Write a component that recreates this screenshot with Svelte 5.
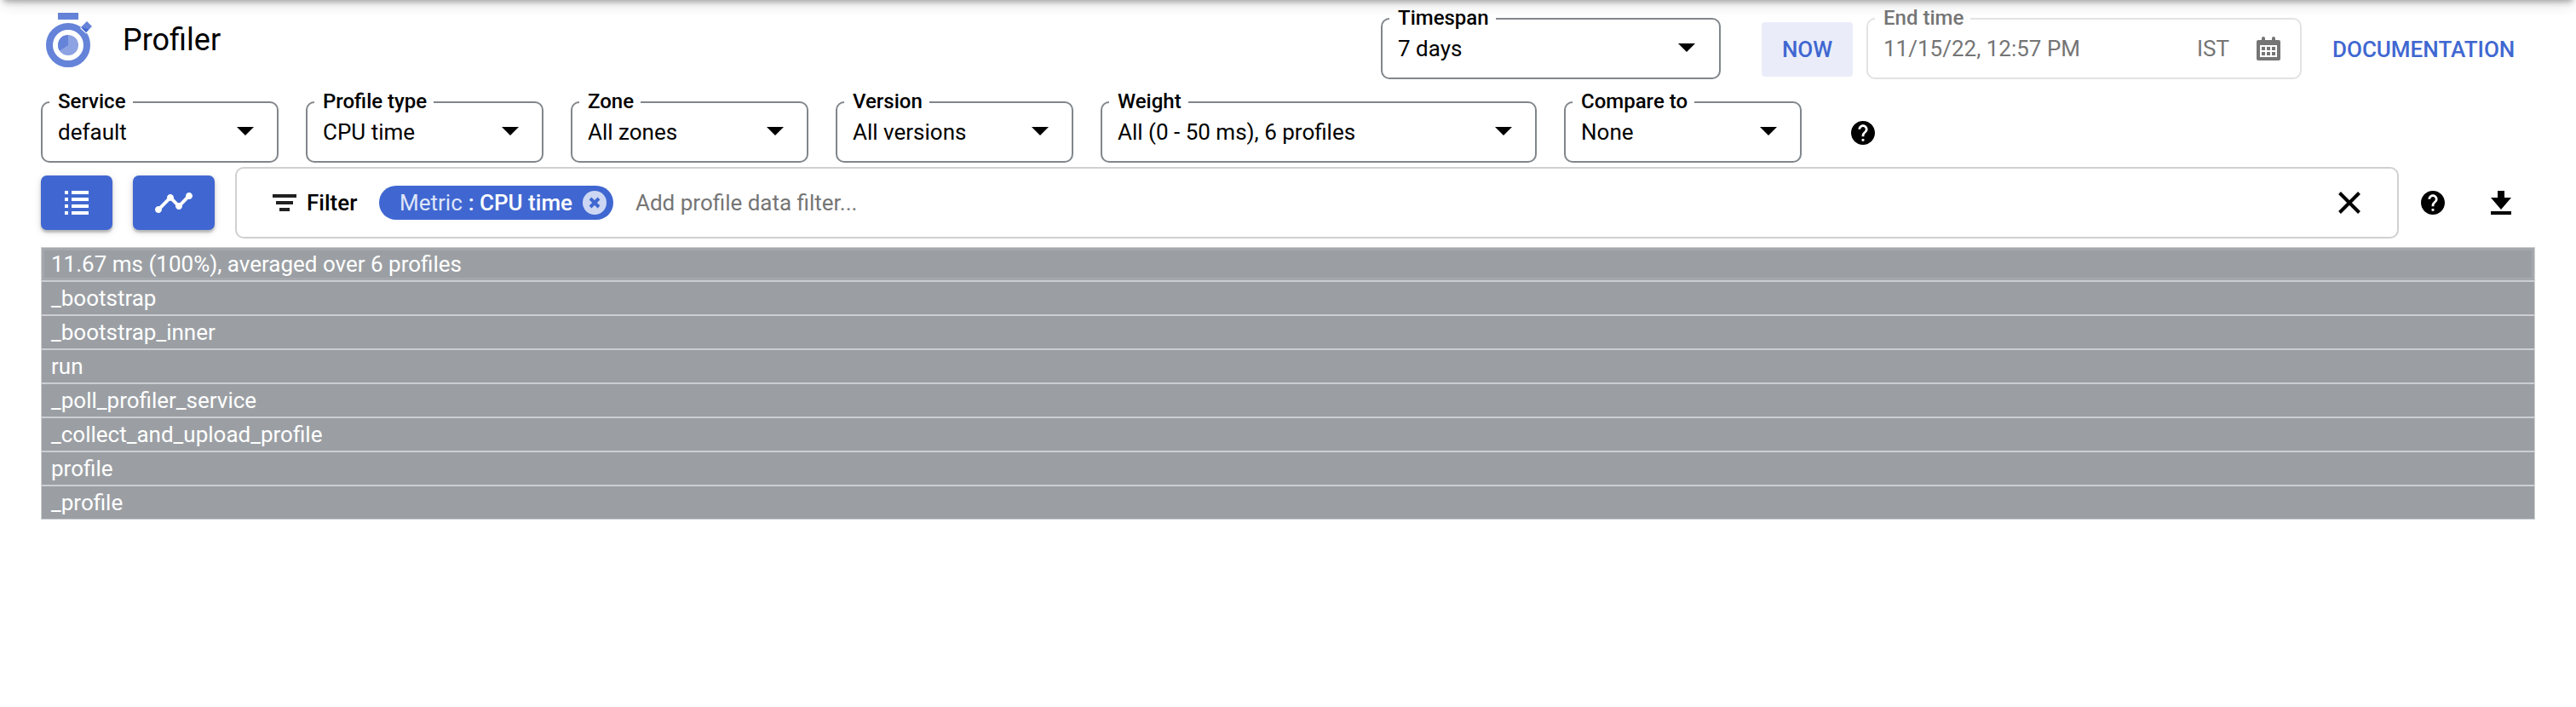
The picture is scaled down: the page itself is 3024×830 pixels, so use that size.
<script>
  const filters = [
    { label: 'Service', value: 'default', w: 279 },
    { label: 'Profile type', value: 'CPU time', w: 279 },
    { label: 'Zone', value: 'All zones', w: 279 },
    { label: 'Version', value: 'All versions', w: 279 },
    { label: 'Weight', value: 'All (0 - 50 ms), 6 profiles', w: 512 },
    { label: 'Compare to', value: 'None', w: 279 }
  ];
  const frames = [
    '11.67 ms (100%), averaged over 6 profiles',
    '_bootstrap',
    '_bootstrap_inner',
    'run',
    '_poll_profiler_service',
    '_collect_and_upload_profile',
    'profile',
    '_profile'
  ];
</script>

{#snippet help()}
  <svg class="help" width="28" height="28" viewBox="2 2 20 20">
    <path d="M12 2C6.48 2 2 6.48 2 12s4.48 10 10 10 10-4.48 10-10S17.52 2 12 2zm1 17h-2v-2h2v2zm2.07-7.75l-.9.92C13.45 12.9 13 13.5 13 15h-2v-.5c0-1.1.45-2.1 1.17-2.83l1.24-1.26c.37-.36.59-.86.59-1.41 0-1.1-.9-2-2-2s-2 .9-2 2H8c0-2.21 1.79-4 4-4s4 1.79 4 4c0 .88-.36 1.68-.93 2.25z" />
  </svg>
{/snippet}

{#snippet select(label, value, w)}
  <fieldset class="field" style="width: {w}px">
    <legend><span>{label}</span></legend>
    <div class="value">
      <span>{value}</span>
      <svg class="caret" width="20" height="10" viewBox="0 0 20 10"><path d="M0 0h20L10 10z" /></svg>
    </div>
  </fieldset>
{/snippet}

<div class="page">
  <div class="topshade"></div>
  <header>
    <svg class="logo" width="60" height="68" viewBox="50 13 60 68">
      <path fill="#6583d8" d="M68 15h24v8H68z" />
      <circle cx="80" cy="53" r="22" fill="none" stroke="#6583d8" stroke-width="8" />
      <path d="M94.500 32.500l7 6.500" stroke="#fff" stroke-width="1.500" />
      <path fill="#6583d8" d="M102 25l6 6-7 7-6-6z" />
      <path fill="#4067d1" d="M95.500 32l5.500 6 3.500-3.500z" />
      <circle cx="80" cy="53" r="12" fill="#8ca2e2" />
      <path fill="#6583d8" d="M80 53V41a12 12 0 0 0-10 18.600z" />
    </svg>
    <h1>Profiler</h1>
    <div class="timespan">{@render select('Timespan', '7 days', 399)}</div>
    <button class="now">NOW</button>
    <fieldset class="field disabled" style="width: 511px">
      <legend><span>End time</span></legend>
      <div class="value">
        <span>11/15/22, 12:57 PM</span>
        <span class="zone">IST</span>
        <svg class="cal" width="28" height="28" viewBox="0 0 28 28">
          <path fill-rule="evenodd" d="M6 4V2a2 2 0 0 1 4 0V4h8V2a2 2 0 0 1 4 0V4h4a2 2 0 0 1 2 2v20a2 2 0 0 1-2 2H2a2 2 0 0 1-2-2V6a2 2 0 0 1 2-2zM4 10v14h20V10z" />
          <path d="M6 12h4v4H6zM12 12h4v4h-4zM18 12h4v4h-4zM6 18h4v4H6zM12 18h4v4h-4zM18 18h4v4h-4z" />
        </svg>
      </div>
    </fieldset>
    <a class="docs">DOCUMENTATION</a>
  </header>

  <div class="filters">
    {#each filters as f}
      {@render select(f.label, f.value, f.w)}
    {/each}
    {@render help()}
  </div>

  <div class="toolbar">
    <button class="primary list">
      <svg width="28" height="28" viewBox="0 0 28 28"><path d="M0 0h4v4H0zM8 0h20v4H8zM0 8h4v4H0zM8 8h20v4H8zM0 16h4v4H0zM8 16h20v4H8zM0 24h4v4H0zM8 24h20v4H8z" /></svg>
    </button>
    <button class="primary chart">
      <svg width="48" height="48" viewBox="0 0 24 24"><path d="M23 8c0 1.100-.9 2-2 2-.18 0-.35-.02-.51-.07l-3.560 3.550c.05.16.07.34.07.52 0 1.100-.9 2-2 2s-2-.9-2-2c0-.18.02-.36.07-.52l-2.550-2.550c-.16.05-.34.07-.52.07s-.36-.02-.52-.07l-4.550 4.560c.05.16.07.33.07.51 0 1.100-.9 2-2 2s-2-.9-2-2 .9-2 2-2c.18 0 .35.02.51.07l4.560-4.550C8.020 9.360 8 9.180 8 9c0-1.100.9-2 2-2s2 .9 2 2c0 .18-.02.36-.07.52l2.550 2.550c.16-.05.34-.07.52-.07s.36.02.52.07l3.550-3.560C19.020 8.350 19 8.180 19 8c0-1.100.9-2 2-2s2 .9 2 2z" /></svg>
    </button>
    <div class="filterbox">
      <svg width="28" height="20" viewBox="0 0 28 20"><path fill="#212121" d="M0 0h28v4H0zM4 8h20v4H4zM8 16h12v4H8z" /></svg>
      <b class="filterlabel">Filter</b>
      <div class="chip">
        <span class="key">Metric</span><span class="val">: CPU time</span>
        <svg width="28" height="28" viewBox="0 0 28 28">
          <circle cx="14" cy="14" r="14" fill="#cdd7f3" />
          <path d="M9 9l10 10m0-10l-10 10" stroke="#4067d1" stroke-width="3.900" />
        </svg>
      </div>
      <span class="placeholder">Add profile data filter...</span>
      <svg class="close" width="26" height="26" viewBox="0 0 26 26"><path d="M1.500 1.500l23 23m0-23l-23 23" stroke="#000" stroke-width="4" /></svg>
    </div>
    {@render help()}
    <svg class="download" width="24" height="28" viewBox="0 0 24 28"><path d="M8 0h8v8h8L12 22 0 8h8zM0 24h24v4H0z" /></svg>
  </div>

  <div class="flame">
    {#each frames as name, i}
      <div class="frame" class:active={i === 0}>{name}</div>
    {/each}
  </div>
</div>

<style>
  :global(body) { background: #fff; }
  .page {
    position: relative;
    box-sizing: border-box;
    width: 3024px;
    height: 830px;
    overflow: hidden;
    background: #fff;
    color: #000;
    font-family: Roboto, sans-serif;
    font-size: 26px;
  }
  svg { display: block; flex: none; }
  button { border: 0; padding: 0; font: inherit; display: flex; align-items: center; justify-content: center; flex: none; }
  .topshade {
    position: absolute;
    left: 4px;
    right: 4px;
    top: -10px;
    height: 10px;
    box-shadow: 0 2px 6px rgba(0, 0, 0, 0.3), 0 2px 18px rgba(0, 0, 0, 0.22);
  }
  header { display: flex; height: 106px; align-items: flex-start; padding-left: 50px; }
  .logo { margin-top: 13px; }
  h1 { margin: 25px 0 0 34px; font-size: 36px; line-height: 44px; font-weight: 400; width: 1477px; }
  .field {
    position: relative;
    box-sizing: border-box;
    min-width: 0;
    flex: none;
    height: 85px;
    margin: 0;
    padding: 0 27px 0 8px;
    border: 2px solid #80868b;
    border-radius: 10px;
  }
  legend { padding: 0 8px 0 10px; font-size: 24px; font-weight: 500; line-height: 28px; height: 28px; }
  legend span { display: block; margin-top: -1px; }
  .value { display: flex; align-items: center; height: 40px; padding-left: 10px; line-height: 30px; }
  .value span { margin-top: 2px; }
  .caret { margin-left: auto; }
  header .field { margin-top: 8px; }
  .timespan .field { padding-right: 28px; }
  .now { width: 107px; height: 64px; margin: 26px 16px 0 48px; border-radius: 4px; background: #eaedf9; color: #4067d1; font-weight: 500; }
  .disabled { border-color: #e3e3e3; color: #757575; fill: #757575; padding-right: 23px; }
  .cal { margin-top: 2px; }
  .zone { margin-left: auto; margin-right: 32px; }
  .docs { margin: 43px 0 0 36px; line-height: 30px; font-weight: 500; color: #4067d1; }
  .filters { display: flex; gap: 32px; height: 90px; padding-left: 48px; }
  .filters .help { margin: 36px 0 0 26px; }
  .toolbar { display: flex; align-items: center; height: 84px; padding-left: 48px; }
  .primary {
    height: 64px;
    border-radius: 7px;
    background: #4067d1;
    fill: #fff;
    box-shadow: 0 3px 3px rgba(0, 0, 0, 0.22), 0 2px 10px rgba(0, 0, 0, 0.14);
  }
  .list { width: 84px; margin-right: 24px; }
  .chart { width: 96px; margin-right: 24px; }
  .filterbox {
    box-sizing: border-box;
    display: flex;
    align-items: center;
    width: 2540px;
    height: 84px;
    margin-right: 26px;
    padding: 0 43px 0 42px;
    border: 2px solid #d0d0d0;
    border-radius: 10px;
  }
  .filterlabel { margin-left: 12px; font-weight: 500; width: 85px; }
  .chip { display: flex; align-items: center; box-sizing: border-box; width: 275px; height: 40px; padding-left: 24px; padding-right: 8px; border-radius: 20px; background: #4067d1; color: #fff; }
  .key { color: #dfe6f8; margin-right: 7px; }
  .val { font-weight: 500; }
  .chip svg { margin-left: auto; }
  .placeholder { margin-left: 26px; color: #757575; }
  .close { margin-left: auto; }
  .download { margin-left: 54px; }
  .flame { width: 2928px; margin: 10px 0 0 48px; }
  .frame {
    box-sizing: border-box;
    height: 40px;
    border: 1px solid #ccced1;
    padding-left: 11px;
    line-height: 38px;
    background: #9b9fa4;
    color: #fff;
  }
  .active { box-shadow: inset 0 0 0 3px #a4a8ad; }
</style>
